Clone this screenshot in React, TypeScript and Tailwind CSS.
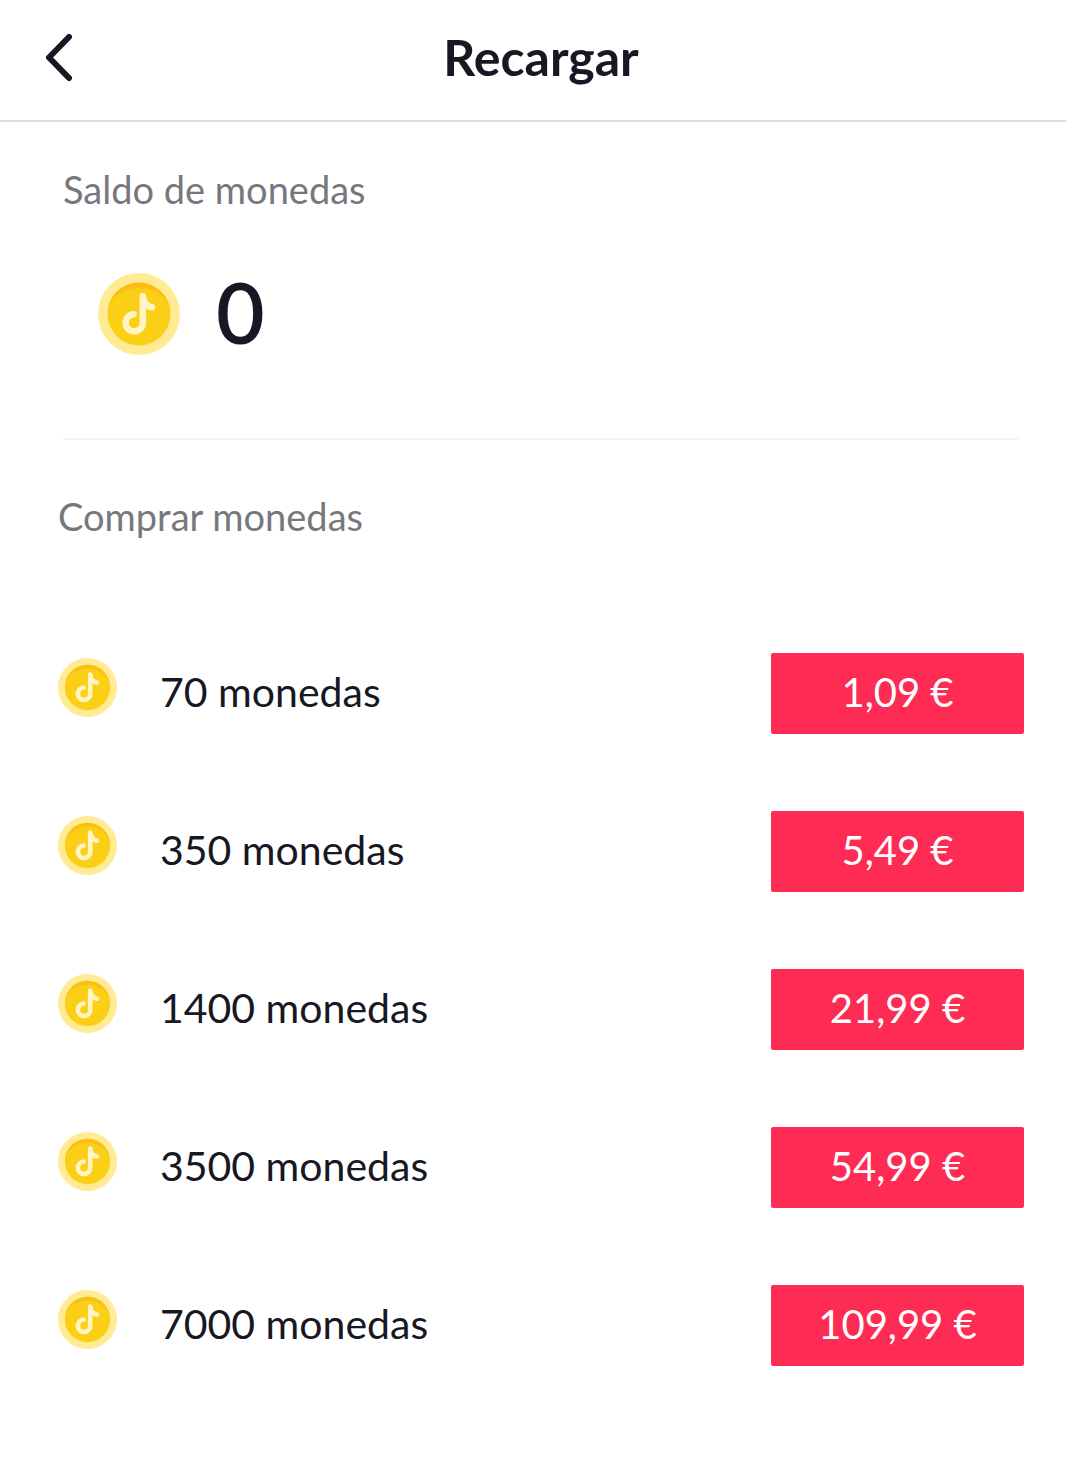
import React from 'react';

const packs = [
  { coins: '70 monedas', price: '1,09 €' },
  { coins: '350 monedas', price: '5,49 €' },
  { coins: '1400 monedas', price: '21,99 €' },
  { coins: '3500 monedas', price: '54,99 €' },
  { coins: '7000 monedas', price: '109,99 €' },
];

function Coin({ className }: { className: string }) {
  return (
    <svg viewBox="0 0 82 82" className={className} aria-hidden="true">
      <circle cx="41" cy="41" r="41" fill="#ffeb94" />
      <circle cx="41" cy="41" r="31.5" fill="#facf15" />
      <path d="M9.500 41a31.500 31.500 0 0 1 63 0A31.500 26 0 0 0 9.500 41z" fill="#fabf15" />
      <path
        d="M35.500 41.200A8.600 8.600 0 1 0 44.800 49.500V23C45.500 29.500 49 33.300 54 34.200"
        fill="none"
        stroke="#fff4c2"
        strokeWidth="6.6"
        strokeLinecap="round"
        strokeLinejoin="round"
      />
    </svg>
  );
}

export default function App() {
  return (
    <main className="min-h-screen bg-white font-['Lato',sans-serif] text-[#161823]">
      <header className="grid h-[122px] grid-cols-[1fr_auto_1fr] items-center border-b-2 border-[#dcdcdd] pr-6 pb-1.5 pl-10">
        <button type="button" aria-label="Volver" className="w-10">
          <svg
            viewBox="0 0 40 50"
            className="h-[50px] w-10"
            fill="none"
            stroke="currentColor"
            strokeWidth="6"
            strokeLinecap="round"
            strokeLinejoin="round"
          >
            <path d="M29 5 9 25.500 29 46" />
          </svg>
        </button>
        <h1 className="text-[50px] leading-[60px] font-bold">Recargar</h1>
      </header>

      <section className="mr-12 ml-[63px] border-b-2 border-[#f3f3f4] pt-10 pb-[81px]">
        <h2 className="text-[38px] leading-[54px] text-[#77777d]">Saldo de monedas</h2>
        <div className="mt-[55px] flex items-center gap-9 pl-[35px]">
          <Coin className="size-[82px]" />
          <span className="pb-1 text-[84px] leading-[82px] font-semibold">0</span>
        </div>
      </section>

      <section className="pt-[49px] pr-[42px] pl-[58px]">
        <h2 className="text-[38px] leading-[54px] text-[#77777d]">Comprar monedas</h2>
        <ul className="mt-[110px] flex flex-col gap-[77px]">
          {packs.map((p) => (
            <li key={p.coins} className="flex h-[81px] items-center">
              <Coin className="mr-[43px] mb-3 size-[59px]" />
              <span className="flex-1 pb-1 text-[41px]">{p.coins}</span>
              <button
                type="button"
                className="h-full w-[253px] rounded-xs bg-[#fe2c55] pb-1 text-[40px] text-white"
              >
                {p.price}
              </button>
            </li>
          ))}
        </ul>
      </section>
    </main>
  );
}
